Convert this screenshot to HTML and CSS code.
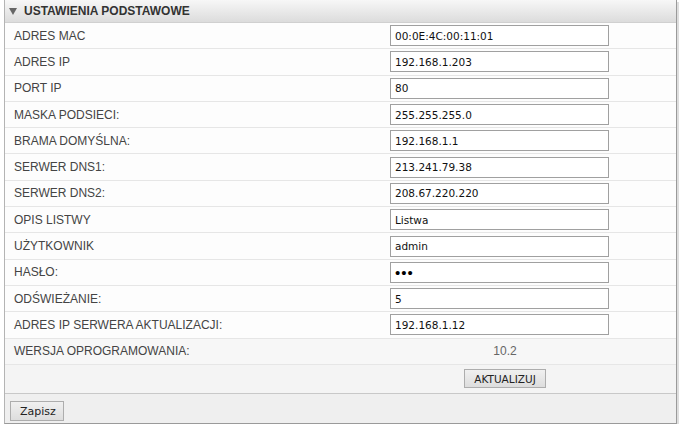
FILE: index.html
```html
<!DOCTYPE html>
<html lang="pl">
<head>
<meta charset="utf-8">
<title>Ustawienia podstawowe</title>
<link rel="stylesheet" href="styles.css">
</head>
<body>
<div class="panel">
  <div class="panel-head">
    <svg class="tri" width="8" height="7" viewBox="0 0 8 7"><path d="M0 0 H8 L4 7 Z" fill="#666"/></svg>
    <span>USTAWIENIA PODSTAWOWE</span>
  </div>
  <div class="rows">
    <div class="row"><div class="lbl">ADRES MAC</div><div class="val"><input class="inp" value="00:0E:4C:00:11:01"></div></div>
    <div class="row"><div class="lbl">ADRES IP</div><div class="val"><input class="inp" value="192.168.1.203"></div></div>
    <div class="row"><div class="lbl">PORT IP</div><div class="val"><input class="inp" value="80"></div></div>
    <div class="row"><div class="lbl">MASKA PODSIECI:</div><div class="val"><input class="inp" value="255.255.255.0"></div></div>
    <div class="row"><div class="lbl">BRAMA DOMYŚLNA:</div><div class="val"><input class="inp" value="192.168.1.1"></div></div>
    <div class="row"><div class="lbl">SERWER DNS1:</div><div class="val"><input class="inp" value="213.241.79.38"></div></div>
    <div class="row"><div class="lbl">SERWER DNS2:</div><div class="val"><input class="inp" value="208.67.220.220"></div></div>
    <div class="row"><div class="lbl">OPIS LISTWY</div><div class="val"><input class="inp" value="Listwa"></div></div>
    <div class="row"><div class="lbl">UŻYTKOWNIK</div><div class="val"><input class="inp" value="admin"></div></div>
    <div class="row"><div class="lbl">HASŁO:</div><div class="val"><input class="inp pw" type="password" value="abc"></div></div>
    <div class="row"><div class="lbl">ODŚWIEŻANIE:</div><div class="val"><input class="inp" value="5"></div></div>
    <div class="row"><div class="lbl">ADRES IP SERWERA AKTUALIZACJI:</div><div class="val"><input class="inp" value="192.168.1.12"></div></div>
    <div class="row alt"><div class="lbl">WERSJA OPROGRAMOWANIA:</div><div class="val center">10.2</div></div>
    <div class="row alt last"><div class="lbl"></div><div class="val center"><button class="btn">AKTUALIZUJ</button></div></div>
  </div>
  <div class="panel-foot"><button class="btn save">Zapisz</button></div>
</div>
</body>
</html>
```
FILE: styles.css
```css
html, body { margin: 0; padding: 0; background: #fff; }
body { font-family: "Liberation Sans", Arial, sans-serif; }
.panel {
  margin-left: 4px;
  width: 671px;
  border-left: 1px solid #b4b4b4;
  border-right: 1px solid #9a9a9a;
  border-bottom: 1px solid #9a9a9a;
  box-shadow: 2px 2px 0 #dedede;
  background: #fcfcfc;
}
.panel-head {
  height: 23px;
  box-sizing: border-box;
  display: flex;
  align-items: center;
  padding-left: 4px;
  background: linear-gradient(#f7f7f7, #dcdcdc);
  border-bottom: 1px solid #d0d0d0;
  font-weight: bold;
  font-size: 12px;
  color: #333;
}
.tri { margin-right: 7px; margin-top: 0; }
.row {
  display: grid;
  grid-template-columns: 380px 240px 1fr;
  height: 26.3px;
  box-sizing: border-box;
  border-bottom: 1px solid #e6e6e6;
  background: #fdfdfd;
  align-items: center;
}
.row.alt { background: #f7f7f7; }
.row.last { height: 29px; border-bottom: 1px solid #c8c8c8; background: #f4f4f4; }
.lbl {
  padding-left: 9px;
  font-size: 12px;
  color: #444;
}
.val { padding-left: 5px; display: flex; align-items: center; }
.val.center { justify-content: center; padding-left: 0; font-size: 12px; color: #666; }
.inp {
  width: 219px;
  height: 21px;
  box-sizing: border-box;
  margin: 0;
  border: 1px solid #a0a0a0;
  background: #fff;
  padding: 0 0 0 4px;
  font-family: "DejaVu Sans", Verdana, sans-serif;
  font-size: 10.5px;
  color: #111;
  outline: none;
}
.inp.pw { font-family: "Liberation Sans", Arial, sans-serif; font-size: 15px; color: #000; padding-left: 4px; letter-spacing: 1px; }
.btn {
  font-family: "DejaVu Sans", Verdana, sans-serif;
  font-size: 10.5px;
  color: #222;
  background: linear-gradient(#f0f0f0, #dddddd);
  border: 1px solid #adadad;
  height: 19px;
  padding: 0 9px;
  margin: 0;
}
.panel-foot {
  height: 29px;
  background: #efefef;
  display: flex;
  align-items: center;
  padding-left: 5px;
}
.btn.save { width: 54px; height: 20px; font-size: 11px; margin-top: 6px; }
```
